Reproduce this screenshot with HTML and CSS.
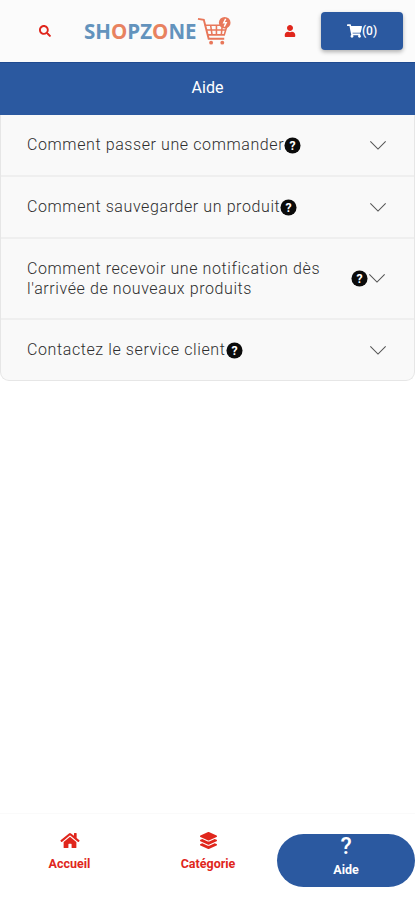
FILE: index.html
```html
<!DOCTYPE html>
<html lang="fr">
<head>
<meta charset="utf-8">
<title>Aide</title>
<link rel="stylesheet" href="styles.css">
</head>
<body>
<div class="app">
  <header class="topbar">
    <svg class="ico-search" viewBox="0 0 512 512"><path fill="#e0261c" d="M505 442.700L405.300 343c-4.500-4.500-10.600-7-17-7H372c27.600-35.300 44-79.700 44-128C416 93.100 322.900 0 208 0S0 93.100 0 208s93.100 208 208 208c48.300 0 92.700-16.400 128-44v16.300c0 6.400 2.500 12.500 7 17l99.700 99.700c9.400 9.400 24.600 9.400 33.900 0l28.300-28.300c9.400-9.400 9.400-24.600.1-34zM208 336c-70.700 0-128-57.200-128-128 0-70.700 57.200-128 128-128 70.700 0 128 57.200 128 128 0 70.700-57.200 128-128 128z"/></svg>
    <div class="logo">
      <span class="logo-text"><span class="lb">SH</span><span class="lo">O</span><span class="lb">PZ</span><span class="lo">O</span><span class="lb">NE</span></span>
      <svg class="logo-cart" viewBox="0 0 36 30" fill="none" stroke="#e8775a">
        <path stroke-width="2" d="M1 2.500 L7 3.500 L12 23 H28"/>
        <path stroke-width="1.600" d="M8 9 H31 L28 19 H10.500 M9.500 14 H29.500 M14 9 L15.500 19 M20 9 V19 M26 9 L25 19"/>
        <circle cx="14.500" cy="27" r="2" fill="#e8775a" stroke="none"/>
        <circle cx="26" cy="27" r="2" fill="#e8775a" stroke="none"/>
        <circle cx="28.500" cy="6.500" r="6" fill="#e8775a" stroke="none"/>
        <path stroke="#fff" stroke-width="1.500" d="M29.500 2.500 L27.500 6.500 H30 L28 10.500"/>
      </svg>
    </div>
    <svg class="ico-user" viewBox="0 0 448 512"><path fill="#e0261c" d="M224 256c70.700 0 128-57.300 128-128S294.700 0 224 0 96 57.300 96 128s57.300 128 128 128zm89.600 32h-16.700c-22.200 10.200-46.900 16-72.900 16s-50.600-5.800-72.900-16h-16.700C60.200 288 0 348.200 0 422.400V464c0 26.500 21.500 48 48 48h352c26.500 0 48-21.500 48-48v-41.600c0-74.200-60.200-134.400-134.400-134.400z"/></svg>
    <button class="cart-btn">
      <svg class="ico-cart" viewBox="0 0 576 512"><path fill="#fff" d="M528.100 301.300l47.300-208C578.800 78.300 567.400 64 552 64H159.200l-9.200-44.800C147.800 8 137.900 0 126.500 0H24C10.700 0 0 10.700 0 24v16c0 13.300 10.700 24 24 24h69.900l70.200 343.400C147.300 417.100 136 435.200 136 456c0 30.900 25.100 56 56 56s56-25.100 56-56c0-15.700-6.400-29.800-16.800-40h209.600C430.400 426.200 424 440.300 424 456c0 30.900 25.100 56 56 56s56-25.100 56-56c0-22.200-12.900-41.300-31.600-50.400l5.500-24.300c3.400-15-8-29.300-23.400-29.300H218.100l-6.500-32h293.100c11.200 0 20.900-7.800 23.400-18.700z"/></svg><span>(0)</span>
    </button>
  </header>
  <div class="title">Aide</div>
  <main class="accordion">
    <div class="row r1"><p class="q">Comment passer une commander</p><svg class="help" viewBox="0 0 18 18"><circle cx="9" cy="9" r="8.500" fill="#0b0b0b"/><text x="9" y="13.500" class="help-t">?</text></svg><span class="sp"></span><svg class="chev" viewBox="0 0 20 12"><path d="M1.500 1.500 L10 10 L18.500 1.500"/></svg></div>
    <div class="row r2"><p class="q">Comment sauvegarder un produit</p><svg class="help" viewBox="0 0 18 18"><circle cx="9" cy="9" r="8.500" fill="#0b0b0b"/><text x="9" y="13.500" class="help-t">?</text></svg><span class="sp"></span><svg class="chev" viewBox="0 0 20 12"><path d="M1.500 1.500 L10 10 L18.500 1.500"/></svg></div>
    <div class="row r3"><p class="q wrap">Comment recevoir une notification dès l'arrivée de nouveaux produits</p><svg class="help" viewBox="0 0 18 18"><circle cx="9" cy="9" r="8.500" fill="#0b0b0b"/><text x="9" y="13.500" class="help-t">?</text></svg><svg class="chev" viewBox="0 0 20 12"><path d="M1.500 1.500 L10 10 L18.500 1.500"/></svg></div>
    <div class="row r4"><p class="q">Contactez le service client</p><svg class="help" viewBox="0 0 18 18"><circle cx="9" cy="9" r="8.500" fill="#0b0b0b"/><text x="9" y="13.500" class="help-t">?</text></svg><span class="sp"></span><svg class="chev" viewBox="0 0 20 12"><path d="M1.500 1.500 L10 10 L18.500 1.500"/></svg></div>
  </main>
  <div class="grow"></div>
  <nav class="tabs">
    <a class="tab">
      <svg class="ico-home" viewBox="0 0 576 512"><path fill="#e0261c" d="M280.400 148.300L96 300.100V464a16 16 0 0 0 16 16l112.100-.3a16 16 0 0 0 15.900-16V368a16 16 0 0 1 16-16h64a16 16 0 0 1 16 16v95.600a16 16 0 0 0 16 16.100L464 480a16 16 0 0 0 16-16V300L295.700 148.300a12.200 12.200 0 0 0-15.300 0zM571.600 251.500L488 182.600V44.100a12 12 0 0 0-12-12h-56a12 12 0 0 0-12 12v72.600L318.500 43a48 48 0 0 0-61 0L4.300 251.500a12 12 0 0 0-1.600 16.900l25.500 31A12 12 0 0 0 45.200 301l235.200-193.700a12.200 12.200 0 0 1 15.300 0L530.900 301a12 12 0 0 0 16.900-1.600l25.500-31a12 12 0 0 0-1.700-16.900z"/></svg>
      <span>Accueil</span>
    </a>
    <a class="tab">
      <svg class="ico-layers" viewBox="0 0 512 512"><path fill="#e0261c" d="M12.410 148.020l232.940 105.670c6.800 3.090 14.490 3.090 21.290 0l232.940-105.670c16.550-7.510 16.550-32.520 0-40.030L266.650 2.310a25.607 25.607 0 0 0-21.290 0L12.410 107.980c-16.550 7.510-16.550 32.530 0 40.040zm487.180 88.280l-58.090-26.330-161.640 73.270c-7.560 3.430-15.590 5.170-23.860 5.170s-16.290-1.740-23.860-5.170L70.510 209.970l-58.100 26.330c-16.550 7.500-16.550 32.500 0 40l232.940 105.590c6.800 3.080 14.490 3.080 21.290 0L499.590 276.300c16.550-7.500 16.550-32.500 0-40zm0 127.800l-57.870-26.230-161.860 73.370c-7.560 3.430-15.590 5.170-23.860 5.170s-16.290-1.740-23.860-5.170L70.290 337.870 12.410 364.100c-16.550 7.500-16.550 32.500 0 40l232.940 105.590c6.800 3.080 14.490 3.080 21.290 0L499.590 404.100c16.550-7.500 16.550-32.500 0-40z"/></svg>
      <span>Catégorie</span>
    </a>
    <a class="tab active">
      <span class="qm">?</span>
      <span>Aide</span>
    </a>
  </nav>
</div>
</body>
</html>
```
FILE: styles.css
```css
* { box-sizing: border-box; }
html, body { margin: 0; padding: 0; }
body { background: #fff; font-family: Roboto, "Liberation Sans", sans-serif; }
.app { width: 415px; height: 900px; display: flex; flex-direction: column; overflow: hidden; }

.topbar { height: 62px; background: #fbfbfb; display: flex; align-items: center; flex: none; }
.ico-search { width: 12px; height: 12px; margin-left: 39px; flex: none; }
.logo { display: flex; align-items: center; margin-left: 33px; width: 147px; flex: none; }
.logo-text { font-family: "Open Sans", sans-serif; font-weight: 700; font-size: 20.500px; letter-spacing: 0; line-height: 1; white-space: nowrap; }
.lb { color: #6393bd; }
.lo { color: #e8825f; }
.logo-cart { width: 35px; height: 30px; flex: none; margin-left: 0; }
.ico-user { width: 12px; height: 12px; margin-left: 53px; flex: none; }
.cart-btn { width: 82px; height: 38px; margin-left: 25px; flex: none; background: #2b59a0; border: 0; border-radius: 4px; color: #fff; display: flex; align-items: center; justify-content: center; font: 500 12px Roboto, sans-serif; box-shadow: 0 2px 4px rgba(0,0,0,.3); padding: 0; }
.ico-cart { width: 15px; height: 14px; }

.title { height: 53px; flex: none; background: #2b59a0; border-top: 1px solid #1f4a90; color: #fff; font-size: 16px; font-weight: 400; display: flex; align-items: center; justify-content: center; padding-bottom: 3px; }

.accordion { background: #f9f9f9; border-radius: 0 0 9px 9px; border: 1px solid #e6e6e6; border-top: 0; flex: none; }
.row { display: flex; align-items: center; padding: 0 27px 0 26px; border-bottom: 2px solid #efefef; }
.row:last-child { border-bottom: 0; }
.r1 { height: 62px; }
.r2 { height: 62px; }
.r3 { height: 81px; }
.r4 { height: 60px; }
.q { margin: 0; font-size: 16px; font-weight: 300; line-height: 20px; color: #2e2e2e; letter-spacing: .6px; }
.wrap { width: 324px; flex: none; }
.help { width: 17px; height: 17px; flex: none; }
.help-t { font: 700 13px Roboto, sans-serif; fill: #fff; text-anchor: middle; }
.sp { flex: 1; }
.chev { width: 18px; height: 11px; flex: none; }
.chev path { fill: none; stroke: #555; stroke-width: 1.200; }

.grow { flex: 1; }
.tabs { height: 87px; flex: none; display: flex; align-items: flex-start; background: #fff; border-top: 1px solid #fafafa; padding-top: 18px; }
.tab { display: flex; flex-direction: column; align-items: center; color: #e0261c; font-size: 12.500px; font-weight: 700; gap: 7px; }
.tab:nth-child(1) { width: 139px; }
.tab:nth-child(2) { width: 138px; }
.ico-home { width: 20px; height: 17px; }
.ico-layers { width: 17px; height: 17px; }
.active { width: 138px; height: 53px; margin-top: 2px; background: #2b59a0; border-radius: 27px; color: #fff; gap: 3px; justify-content: flex-start; padding-top: 1px; }
.qm { font-size: 23px; font-weight: 500; line-height: 24px; }
```
